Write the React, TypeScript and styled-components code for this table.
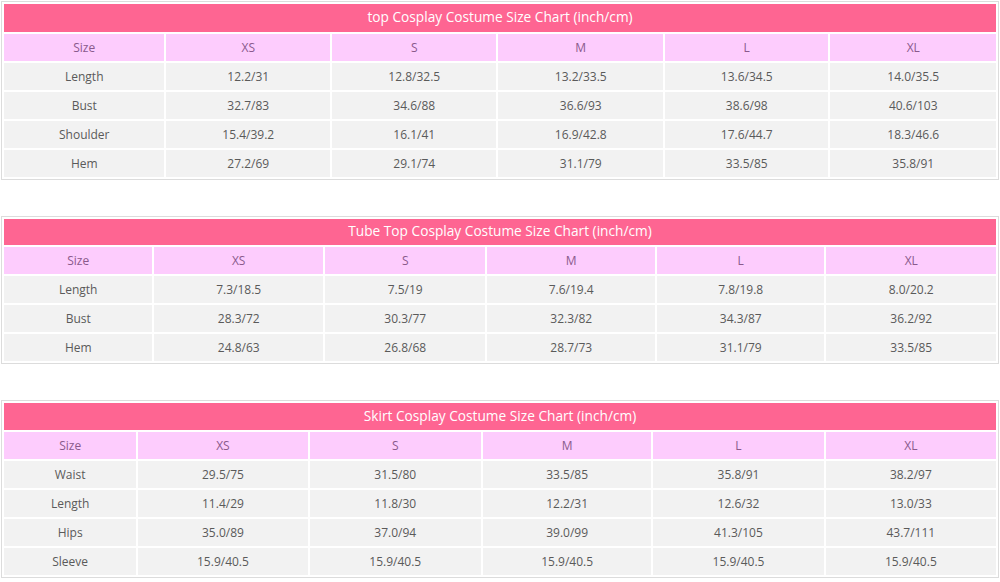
import styled, { createGlobalStyle } from 'styled-components';

const GlobalStyle = createGlobalStyle`
  html, body {
    margin: 0;
    padding: 0;
    background: #ffffff;
  }
  body {
    font-family: "Open Sans", "Liberation Sans", sans-serif;
  }
`;

type Chart = {
  title: string;
  titleHeight: number;
  columns: number[];
  rows: string[][];
};

const sizes = ['Size', 'XS', 'S', 'M', 'L', 'XL'];

const charts: Chart[] = [
  {
    title: 'top Cosplay Costume Size Chart (inch/cm)',
    titleHeight: 28,
    columns: [160, 163, 164, 164, 163, 165],
    rows: [
      ['Length', '12.2/31', '12.8/32.5', '13.2/33.5', '13.6/34.5', '14.0/35.5'],
      ['Bust', '32.7/83', '34.6/88', '36.6/93', '38.6/98', '40.6/103'],
      ['Shoulder', '15.4/39.2', '16.1/41', '16.9/42.8', '17.6/44.7', '18.3/46.6'],
      ['Hem', '27.2/69', '29.1/74', '31.1/79', '33.5/85', '35.8/91'],
    ],
  },
  {
    title: 'Tube Top Cosplay Costume Size Chart (inch/cm)',
    titleHeight: 26,
    columns: [148, 168, 160, 167, 167, 169],
    rows: [
      ['Length', '7.3/18.5', '7.5/19', '7.6/19.4', '7.8/19.8', '8.0/20.2'],
      ['Bust', '28.3/72', '30.3/77', '32.3/82', '34.3/87', '36.2/92'],
      ['Hem', '24.8/63', '26.8/68', '28.7/73', '31.1/79', '33.5/85'],
    ],
  },
  {
    title: 'Skirt Cosplay Costume Size Chart (inch/cm)',
    titleHeight: 27,
    columns: [132, 169, 171, 168, 170, 170],
    rows: [
      ['Waist', '29.5/75', '31.5/80', '33.5/85', '35.8/91', '38.2/97'],
      ['Length', '11.4/29', '11.8/30', '12.2/31', '12.6/32', '13.0/33'],
      ['Hips', '35.0/89', '37.0/94', '39.0/99', '41.3/105', '43.7/111'],
      ['Sleeve', '15.9/40.5', '15.9/40.5', '15.9/40.5', '15.9/40.5', '15.9/40.5'],
    ],
  },
];

const Page = styled.div`
  display: flex;
  flex-direction: column;
  gap: 36px;
  padding: 1px 0 0 1px;
  width: 998px;
`;

const Table = styled.div<{ $cols: string }>`
  display: grid;
  grid-template-columns: ${(p) => p.$cols};
  gap: 2px;
  padding: 2px;
  border: 1px solid #dcdcdc;
  background: #ffffff;
`;

const Title = styled.div<{ $h: number }>`
  grid-column: 1 / -1;
  height: ${(p) => p.$h}px;
  display: flex;
  align-items: center;
  justify-content: center;
  padding-bottom: 2px;
  box-sizing: border-box;
  background: #fe6592;
  color: #ffffff;
  font-size: 13.7px;
  line-height: 1;
`;

const Cell = styled.div<{ $head?: boolean }>`
  height: 27px;
  display: flex;
  align-items: center;
  justify-content: center;
  background: ${(p) => (p.$head ? '#fdccfd' : '#f2f2f2')};
  color: ${(p) => (p.$head ? '#8a5a8c' : '#5a5a5a')};
  font-size: 12px;
  white-space: nowrap;
`;

function SizeChart({ chart }: { chart: Chart }) {
  const cols = chart.columns.map((c) => `${c}fr`).join(' ');
  return (
    <Table $cols={cols}>
      <Title $h={chart.titleHeight}>{chart.title}</Title>
      {sizes.map((s) => (
        <Cell $head key={s}>
          {s}
        </Cell>
      ))}
      {chart.rows.map((row) =>
        row.map((v, i) => <Cell key={row[0] + i}>{v}</Cell>)
      )}
    </Table>
  );
}

export default function App() {
  return (
    <>
      <GlobalStyle />
      <Page>
        {charts.map((c) => (
          <SizeChart chart={c} key={c.title} />
        ))}
      </Page>
    </>
  );
}
